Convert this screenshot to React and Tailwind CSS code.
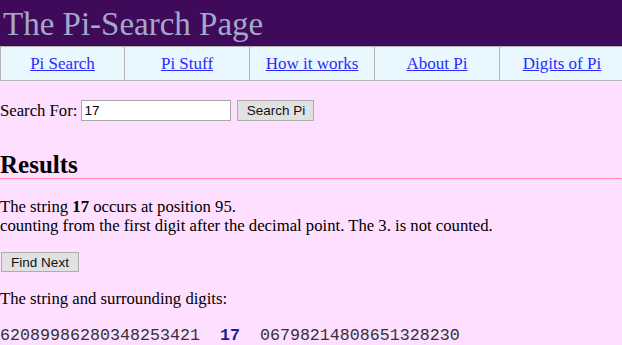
import React, { useState } from "react";

const links = ["Pi Search", "Pi Stuff", "How it works", "About Pi", "Digits of Pi"];

const App = () => {
    const [query, setQuery] = useState("17");

    return (
        <div className="min-h-screen bg-[#ffdfff] text-black font-['Liberation_Serif',serif] overflow-hidden">
            <div className="h-[46px] bg-[#400a5a] flex items-center pl-[3px]">
                <h1 className="text-[33px] leading-none text-[#a3a9c9] font-normal pt-[2px]">
                    The Pi-Search Page
                </h1>
            </div>
            <div className="flex w-[626px] h-[35px] bg-[#e9f7ff] border-y border-[#b4b4b4]">
                {links.map((label, i) => (
                    <div
                        key={label}
                        className={
                            "w-[125px] shrink-0 flex items-center justify-center border-r border-[#b4b4b4] " +
                            (i === 0 ? "border-l" : "")
                        }
                    >
                        <a href="#" className="text-[17px] text-[#2a2aff] underline">
                            {label}
                        </a>
                    </div>
                ))}
            </div>

            <div className="mt-[19px] flex items-center h-[21px] text-[16.7px]">
                <span>Search For:</span>
                <input
                    type="text"
                    value={query}
                    onChange={(e) => setQuery(e.target.value)}
                    className="ml-[4px] w-[150px] h-[21px] bg-white border border-[#a9a9a9] px-[2px] text-[13.5px] font-['Liberation_Sans',sans-serif] outline-none"
                />
                <button className="ml-[6px] w-[77px] h-[21px] bg-[#e1e1e1] border border-[#adadad] text-[13.5px] font-['Liberation_Sans',sans-serif] text-[#111]">
                    Search Pi
                </button>
            </div>

            <h2 className="mt-[30px] text-[25px] font-bold leading-[27px]">Results</h2>
            <div className="h-px bg-[repeating-linear-gradient(90deg,#ff6f8c_0_1px,#ffb4c8_1px_2px)]" />

            <p className="mt-[18px] text-[16.7px] leading-[19px]">
                The string <b>17</b> occurs at position 95.
                <br />
                counting from the first digit after the decimal point. The 3. is not counted.
            </p>

            <button className="mt-[17px] ml-[1px] w-[78px] h-[20px] bg-[#e1e1e1] border border-[#adadad] text-[13.5px] font-['Liberation_Sans',sans-serif] text-[#111] block">
                Find Next
            </button>

            <p className="mt-[17px] text-[16.7px] leading-[19px]">The string and surrounding digits:</p>

            <p className="mt-[18px] text-[16.67px] leading-[19px] font-['Liberation_Mono',monospace] text-[#333] whitespace-pre">
                {"62089986280348253421  "}
                <b className="text-[#1a1a9c]">17</b>
                {"  06798214808651328230"}
            </p>
        </div>
    );
};

export default App;
